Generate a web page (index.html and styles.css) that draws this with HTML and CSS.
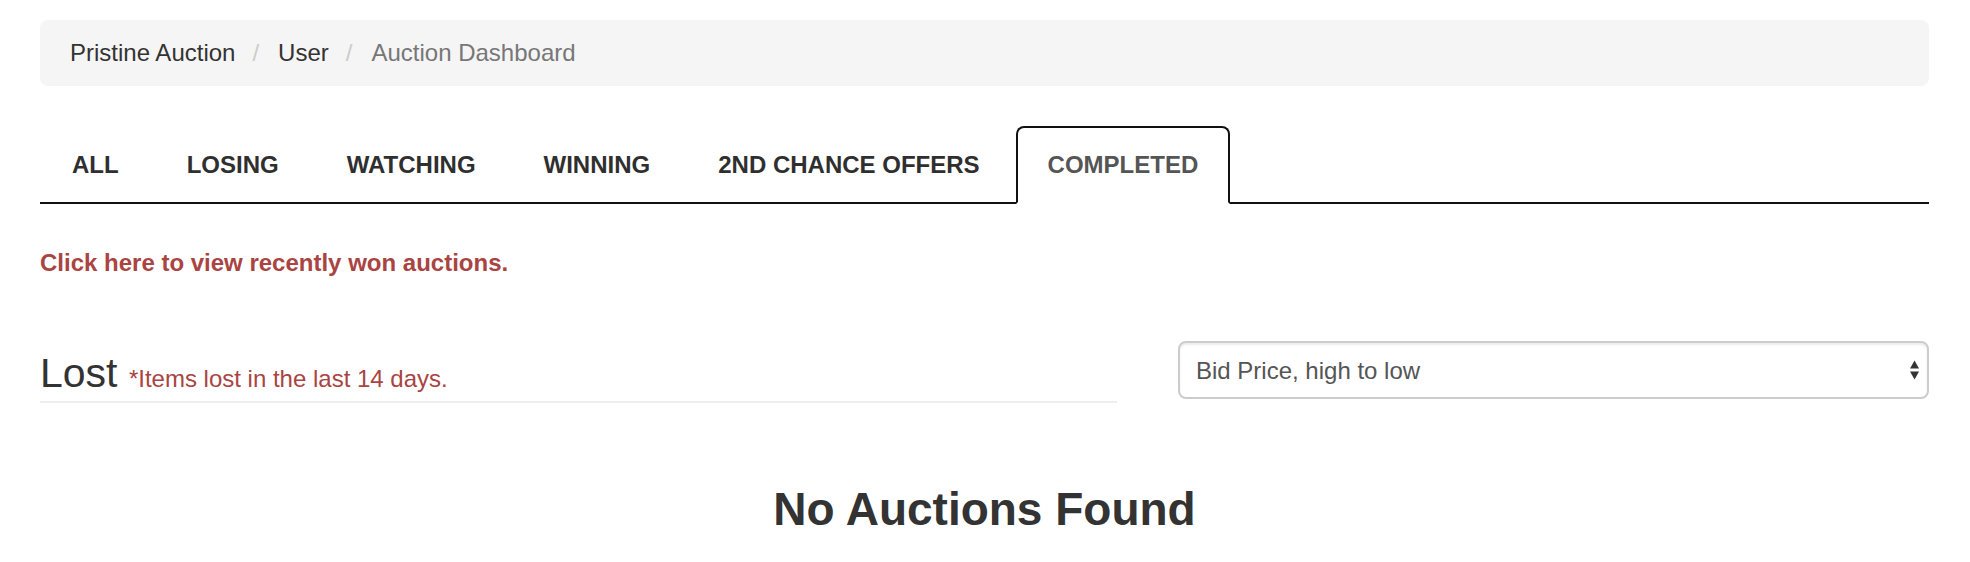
FILE: index.html
```html
<!DOCTYPE html>
<html lang="en">
<head>
<meta charset="utf-8">
<title>Auction Dashboard</title>
<link rel="stylesheet" href="styles.css">
</head>
<body>
<div class="page">
  <ol class="breadcrumb">
    <li><a href="#">Pristine Auction</a></li>
    <li><a href="#">User</a></li>
    <li class="current">Auction Dashboard</li>
  </ol>

  <ul class="tabs">
    <li><a href="#">ALL</a></li>
    <li><a href="#">LOSING</a></li>
    <li><a href="#">WATCHING</a></li>
    <li><a href="#">WINNING</a></li>
    <li><a href="#">2ND CHANCE OFFERS</a></li>
    <li class="active"><a href="#">COMPLETED</a></li>
  </ul>

  <p class="won-link"><a href="#">Click here to view recently won auctions.</a></p>

  <div class="row">
    <h3 class="section-title">Lost <small>*Items lost in the last 14 days.</small></h3>
    <div class="sort">
      <select class="sort-select">
        <option>Bid Price, high to low</option>
        <option>Bid Price, low to high</option>
        <option>Ending soonest</option>
      </select>
      <svg class="sort-arrows" width="11" height="22" viewBox="0 0 11 22" aria-hidden="true">
        <polygon points="1,9.5 5.5,1.5 10,9.5" fill="#333"/>
        <polygon points="1,12.5 5.5,20.5 10,12.5" fill="#333"/>
      </svg>
    </div>
  </div>

  <h2 class="empty">No Auctions Found</h2>
</div>
</body>
</html>
```

FILE: styles.css
```css
* {
  box-sizing: border-box;
}

html, body {
  margin: 0;
  padding: 0;
  background: #fff;
}

body {
  font-family: "Liberation Sans", Arial, Helvetica, sans-serif;
  font-size: 24px;
  color: #333;
}

a {
  text-decoration: none;
}

.page {
  padding: 20px 41px 0 40px;
}

/* Breadcrumb */
.breadcrumb {
  display: flex;
  margin: 0 0 40px 0;
  padding: 16px 30px;
  list-style: none;
  background: #f5f5f5;
  border-radius: 8px;
  line-height: 34px;
}

.breadcrumb a {
  color: #333;
}

.breadcrumb li + li::before {
  content: "/";
  padding: 0 19px 0 17px;
  color: #ccc;
}

.breadcrumb .current {
  color: #777;
}

/* Tabs */
.tabs {
  display: flex;
  margin: 0;
  padding: 0;
  list-style: none;
  border-bottom: 2px solid #111;
}

.tabs li {
  margin-right: 4px;
  margin-bottom: -2px;
}

.tabs a {
  display: block;
  padding: 20px 30px 20px;
  border: 2px solid transparent;
  border-radius: 8px 8px 0 0;
  font-weight: 700;
  font-size: 24px;
  line-height: 34px;
  color: #2f2f2f;
}

.tabs .active a {
  color: #555;
  background: #fff;
  border-color: #111 #111 transparent;
}

/* Won link */
.won-link {
  margin: 42px 0 62px;
  line-height: 33px;
}

.won-link a {
  color: #a94442;
  font-weight: 700;
}

/* Row */
.row {
  display: grid;
  grid-template-columns: 1077fr 751fr;
  column-gap: 61px;
  align-items: start;
}

.section-title {
  margin: 10px 0 0;
  padding-bottom: 0;
  border-bottom: 2px solid #eee;
  font-weight: 400;
  font-size: 41px;
  line-height: 45px;
  color: #333;
}

.section-title small {
  font-size: 24px;
  color: #a94442;
}

.sort {
  position: relative;
}

.sort-select {
  display: block;
  width: 100%;
  height: 58px;
  padding: 0 40px 0 16px;
  border: 2px solid #ccc;
  border-radius: 8px;
  background: #fff;
  box-shadow: inset 0 2px 2px rgba(0, 0, 0, 0.075);
  font-family: "Liberation Sans", Arial, Helvetica, sans-serif;
  font-size: 24px;
  color: #555;
  appearance: none;
  -webkit-appearance: none;
  outline: none;
}

.sort-arrows {
  position: absolute;
  right: 9px;
  top: 18px;
  pointer-events: none;
}

/* Empty state */
.empty {
  margin: 81px 0 0;
  text-align: center;
  font-weight: 700;
  font-size: 46px;
  line-height: 51px;
  color: #333;
}
```
